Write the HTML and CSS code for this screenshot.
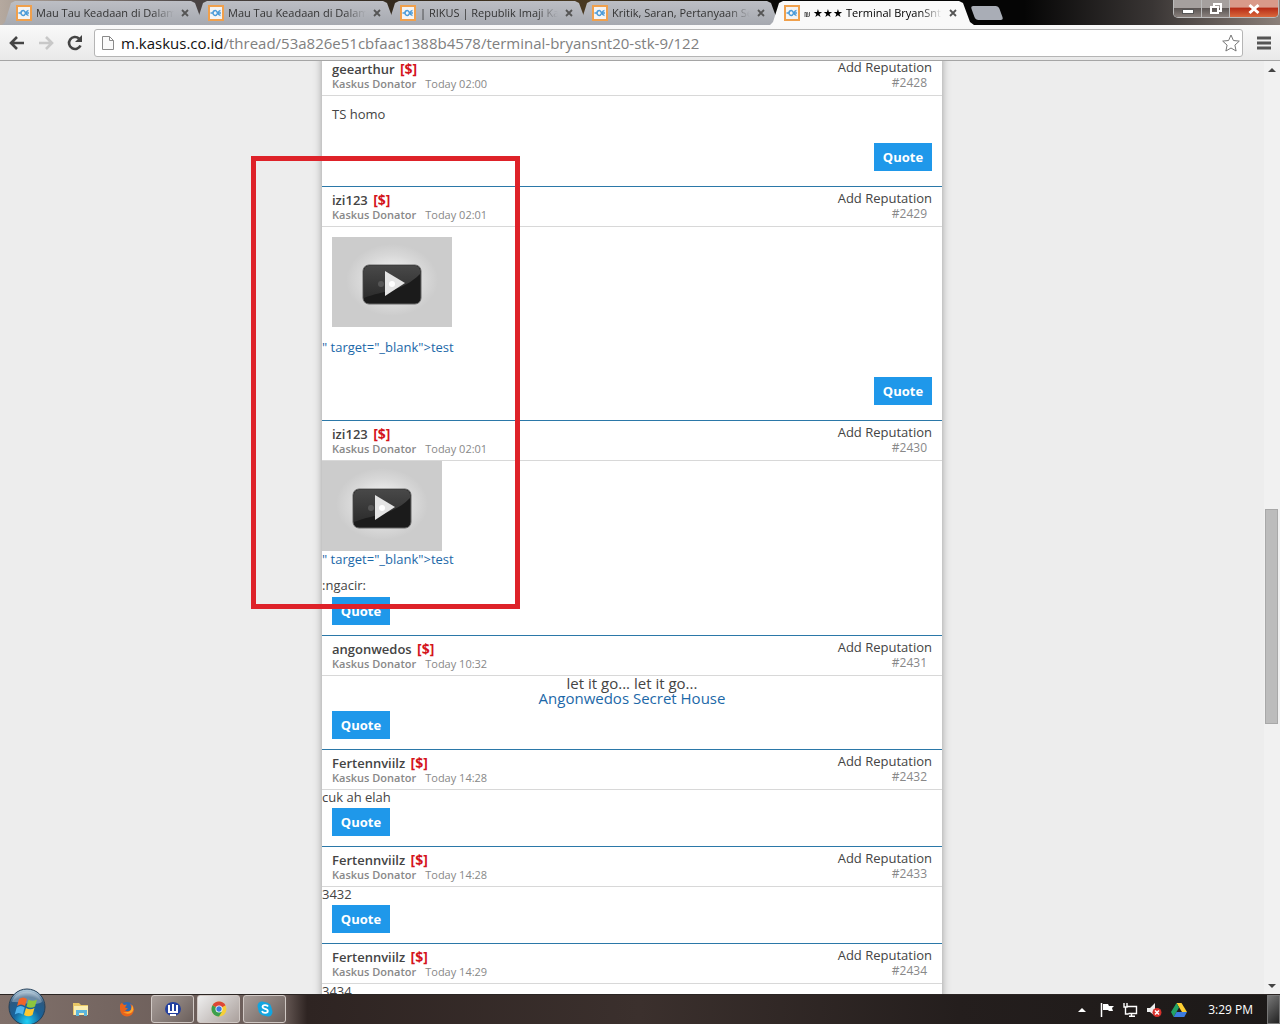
FILE: index.html
```html
<!DOCTYPE html>
<html lang="id">
<head>
<meta charset="utf-8">
<title>Terminal BryanSnt20</title>
<link rel="stylesheet" href="styles.css">
</head>
<body>
<svg class="defs" aria-hidden="true">
  <defs>
    <linearGradient id="gloss" x1="0" y1="0" x2="0" y2="1"><stop offset="0" stop-color="#484848"/><stop offset="1" stop-color="#2c2c2c"/></linearGradient>
    <radialGradient id="halo"><stop offset="0.4" stop-color="#e8e8e8"/><stop offset="0.7" stop-color="#d8d8d8"/><stop offset="1" stop-color="#ccc"/></radialGradient>
    <radialGradient id="orb" cx="50%" cy="90%" r="85%"><stop offset="0" stop-color="#1fd0f5"/><stop offset="0.45" stop-color="#16639c"/><stop offset="0.8" stop-color="#2d587e"/><stop offset="1" stop-color="#a9c3d6"/></radialGradient>
    <symbol id="fav" viewBox="0 0 16 16"><rect x="1" y="1" width="14" height="14" fill="#f4f4f4" stroke="#f0a04c" stroke-width="2"/><path d="M2.500 8h2M7.500 5.500a2.500 2.500 0 1 0 0 5c2 0 2.500-5 5-5M7.500 5.500c2 0 2 5 5 5M10 8h3" fill="none" stroke="#4b9bd8" stroke-width="1.500"/></symbol>
    <symbol id="close" viewBox="0 0 8 8"><path d="M1 1l6 6M7 1l-6 6" stroke="#555" stroke-width="1.800"/></symbol>
    <symbol id="video" viewBox="0 0 120 90"><rect width="120" height="90" fill="#ccc"/><ellipse cx="60" cy="43" rx="46" ry="36" fill="url(#halo)"/><rect x="31" y="28" width="58" height="39" rx="6" fill="#1b1b1b" stroke="#666"/><path d="M32 61V34q0-5 5-5h46q5 0 5 5v3C70 55 52 53 32 61z" fill="url(#gloss)"/><circle cx="49" cy="47" r="3" fill="#555"/><path d="M53 34l20 12-20 13z" fill="#e4e4e4"/><circle cx="60" cy="47" r="3" fill="#fff"/></symbol>
  </defs>
</svg>
<header class="titlebar">
  <nav class="tabs" aria-label="Tabs">
    <a class="tab" href="#t1"><svg class="fav"><use href="#fav"/></svg><span class="tab-title">Mau Tau Keadaan di Dalam</span><svg class="close"><use href="#close"/></svg></a>
    <a class="tab" href="#t2"><svg class="fav"><use href="#fav"/></svg><span class="tab-title">Mau Tau Keadaan di Dalam</span><svg class="close"><use href="#close"/></svg></a>
    <a class="tab" href="#t3"><svg class="fav"><use href="#fav"/></svg><span class="tab-title">| RIKUS | Republik Imaji Kask</span><svg class="close"><use href="#close"/></svg></a>
    <a class="tab" href="#t4"><svg class="fav"><use href="#fav"/></svg><span class="tab-title">Kritik, Saran, Pertanyaan Se</span><svg class="close"><use href="#close"/></svg></a>
    <a class="tab active" href="#t5"><svg class="fav"><use href="#fav"/></svg><span class="tab-title"><small>₪</small> ★★★ Terminal BryanSnt</span><svg class="close"><use href="#close"/></svg></a>
    <button class="newtab" aria-label="New tab"></button>
  </nav>
  <div class="winctl">
    <button aria-label="Minimize"><svg width="12" height="12"><rect x="0.500" y="6.500" width="11" height="4" fill="#fff" stroke="#555"/></svg></button>
    <button aria-label="Restore"><svg width="14" height="14"><path d="M5 4V2h7v7h-2M2 5h7v6H2z" fill="none" stroke="#fff" stroke-width="2"/><rect x="4.500" y="7.500" width="2" height="1" fill="#555"/></svg></button>
    <button class="exit" aria-label="Close"><svg width="12" height="12"><path d="M1.500 2l9 8M10.500 2l-9 8" stroke="#fff" stroke-width="3"/></svg></button>
  </div>
</header>
<div class="toolbar">
  <button aria-label="Back"><svg width="16" height="14"><path d="M15 7H2M8 1L2 7l6 6" fill="none" stroke="#444" stroke-width="2.600"/></svg></button>
  <button aria-label="Forward"><svg width="16" height="14"><path d="M1 7h13M8 1l6 6-6 6" fill="none" stroke="#c8c8c8" stroke-width="2.600"/></svg></button>
  <button aria-label="Reload"><svg width="16" height="16"><path d="M13.500 10.500A6 6 0 1 1 12 3.500" fill="none" stroke="#444" stroke-width="2.600"/><path d="M15 0v7H8z" fill="#444"/></svg></button>
  <div class="omnibox">
    <svg width="12" height="16"><path d="M.5 1.500h7l4 4v9H.5zM7.500 1.500v4h4" fill="#fafafa" stroke="#8a8a8a"/></svg>
    <a class="url" href="#url"><b>m.kaskus.co.id</b>/thread/53a826e51cbfaac1388b4578/terminal-bryansnt20-stk-9/122</a>
    <svg class="star" width="18" height="18"><path d="M9 1l2.400 5.500 5.900.6-4.400 4 1.200 5.900L9 14l-5.100 3 1.200-5.900-4.400-4 5.900-.6z" fill="#fff" stroke="#777"/></svg>
  </div>
  <button class="menu" aria-label="Menu"><svg width="14" height="14"><path d="M0 2h14M0 7h14M0 12h14" stroke="#555" stroke-width="3"/></svg></button>
</div>
<div class="viewport">
  <main class="page">
    <div class="thread">
      <article class="post">
        <header class="head"><div><h2>geearthur <em>[$]</em></h2><p><b>Kaskus Donator</b><time>Today 02:00</time></p></div><div class="meta"><a href="#rep">Add Reputation</a><span>#2428</span></div></header>
        <p class="text padded">TS homo</p>
        <button class="quote right">Quote</button>
      </article>
      <article class="post">
        <header class="head"><div><h2>izi123 <em>[$]</em></h2><p><b>Kaskus Donator</b><time>Today 02:01</time></p></div><div class="meta"><a href="#rep">Add Reputation</a><span>#2429</span></div></header>
        <svg class="video inset"><use href="#video"/></svg>
        <a class="text leak spaced" href="#test">" target="_blank"&gt;test</a>
        <button class="quote right">Quote</button>
      </article>
      <article class="post">
        <header class="head"><div><h2>izi123 <em>[$]</em></h2><p><b>Kaskus Donator</b><time>Today 02:01</time></p></div><div class="meta"><a href="#rep">Add Reputation</a><span>#2430</span></div></header>
        <svg class="video"><use href="#video"/></svg>
        <a class="text leak" href="#test">" target="_blank"&gt;test</a>
        <p class="text follow">:ngacir:</p>
        <button class="quote">Quote</button>
      </article>
      <article class="post">
        <header class="head"><div><h2>angonwedos <em>[$]</em></h2><p><b>Kaskus Donator</b><time>Today 10:32</time></p></div><div class="meta"><a href="#rep">Add Reputation</a><span>#2431</span></div></header>
        <p class="song">let it go... let it go...<br><a href="#house">Angonwedos Secret House</a></p>
        <button class="quote">Quote</button>
      </article>
      <article class="post">
        <header class="head"><div><h2>Fertennviilz <em>[$]</em></h2><p><b>Kaskus Donator</b><time>Today 14:28</time></p></div><div class="meta"><a href="#rep">Add Reputation</a><span>#2432</span></div></header>
        <p class="text">cuk ah elah</p>
        <button class="quote">Quote</button>
      </article>
      <article class="post">
        <header class="head"><div><h2>Fertennviilz <em>[$]</em></h2><p><b>Kaskus Donator</b><time>Today 14:28</time></p></div><div class="meta"><a href="#rep">Add Reputation</a><span>#2433</span></div></header>
        <p class="text">3432</p>
        <button class="quote">Quote</button>
      </article>
      <article class="post">
        <header class="head"><div><h2>Fertennviilz <em>[$]</em></h2><p><b>Kaskus Donator</b><time>Today 14:29</time></p></div><div class="meta"><a href="#rep">Add Reputation</a><span>#2434</span></div></header>
        <p class="text">3434</p>
        <button class="quote">Quote</button>
      </article>
      <div class="marker"></div>
    </div>
  </main>
  <div class="scrollbar">
    <svg width="8" height="4"><path d="M0 4l4-4 4 4z" fill="#444"/></svg>
    <div class="track"><div class="thumb"></div></div>
    <svg width="8" height="4"><path d="M0 0l4 4 4-4z" fill="#444"/></svg>
  </div>
</div>
<footer class="taskbar">
  <button class="start" aria-label="Start"><svg width="38" height="38"><circle cx="19" cy="19" r="18" fill="url(#orb)" stroke="#233f58"/><path d="M4 14C8 0 30 0 34 14 26 19 12 13 4 14z" fill="#fff" opacity=".3"/><path d="M11 11q4-3 8 0l-2 7q-4-3-8 0z" fill="#f0652a"/><path d="M20.500 11.500q4 2.500 8.500 0l-2 7q-4 2.500-8.500 0z" fill="#8dc63f"/><path d="M8.700 19.500q4-3 8 0l-2 7q-4-3-8 0z" fill="#4fb4ee"/><path d="M18 20q4 2.500 8.500 0l-2 7q-4 2.500-8.500 0z" fill="#fdc82f"/></svg></button>
  <div class="apps">
    <button aria-label="Explorer"><svg width="18" height="16"><path d="M1 2h6l2 2h7v10H1z" fill="#e9c765"/><path d="M2 5h14v9H2z" fill="#fbeeb1"/><path d="M4 15V9h11v6h-3v-3H7v3z" fill="#5db6dc"/></svg></button>
    <button aria-label="Firefox"><svg width="16" height="16"><circle cx="8" cy="8" r="7" fill="#2d68b0"/><path d="M1 4q1-2 2-2l2 2 3-.5-2 3 3 1-3 2q4 2 6-1 1-3-1-6 4 2 4 6a7 7 0 0 1-14 0z" fill="#e8641b"/><path d="M13 4q3 5-1 8-4 2-8-1 6 1 8-2z" fill="#fba92e"/></svg></button>
    <button class="open" aria-label="Word tool"><svg width="16" height="16"><ellipse cx="8" cy="8" rx="8" ry="7" fill="#2340a0"/><path d="M4 4v7h8V4M8 3v8M5 14h6" fill="none" stroke="#fff" stroke-width="2"/></svg></button>
    <button class="open lit" aria-label="Chrome"><svg width="16" height="16"><circle cx="8" cy="8" r="7.500" fill="#f6cf3a"/><path d="M8 8L1.500 4.300a7.500 7.500 0 0 1 13 0z" fill="#dd4637"/><path d="M8 8L1.500 4.300A7.500 7.500 0 0 0 8 15.500l3-5z" fill="#3b9f4e"/><circle cx="8" cy="8" r="3.500" fill="#fff"/><circle cx="8" cy="8" r="2.700" fill="#3c7be0"/></svg></button>
    <button class="open" aria-label="Skype"><svg width="16" height="16"><circle cx="5" cy="5" r="4.500" fill="#12a5e0"/><circle cx="11" cy="11" r="4.500" fill="#12a5e0"/><circle cx="8" cy="8" r="6.800" fill="#12a5e0"/><path d="M11 5.500C10 3.500 5.500 3.700 5.500 6c0 2.300 5.300 1.500 5.300 3.900 0 2.500-5 2.500-5.800 0" fill="none" stroke="#fff" stroke-width="1.800"/></svg></button>
  </div>
  <div class="tray">
    <svg class="more" width="8" height="4"><path d="M0 4l4-4 4 4z" fill="#fff"/></svg>
    <svg width="14" height="14"><path d="M1.500 0v14" stroke="#fff" stroke-width="1.500"/><path d="M3 1h5l1 2h5l-2 2 1 3H9L8 7H3z" fill="#fff"/></svg>
    <svg width="15" height="14"><path d="M4.500 3.500h9v7h-8M8.500 11v2M6 13.200h6M1 0v4h3V0M2.500 4v7h3" fill="none" stroke="#fff" stroke-width="1.400"/></svg>
    <svg width="15" height="14"><path d="M0 5h3l5-5v13L3 9H0z" fill="#eee"/><circle cx="10" cy="9.500" r="4.500" fill="#d8312c"/><path d="M8 7.500l4 4M12 7.500l-4 4" stroke="#fff" stroke-width="1.500"/></svg>
    <svg width="16" height="14"><path d="M5.500 0h5L16 9h-5z" fill="#fdcf33"/><path d="M5.500 0L8 4.500 2.700 14 0 9z" fill="#22a265"/><path d="M5.500 9H16l-2.700 5H2.700z" fill="#3c7be0"/></svg>
    <time class="clock">3:29 PM</time>
    <button class="desktop" aria-label="Show desktop"></button>
  </div>
</footer>
</body>
</html>
```
FILE: styles.css
```css
* { box-sizing: border-box; }
body { margin: 0; height: 100vh; display: flex; flex-direction: column; overflow: hidden; font: 13px/16px "Open Sans", sans-serif; color: #444; background: #ededed; }
button { border: 0; padding: 0; background: none; font: inherit; display: flex; align-items: center; justify-content: center; }
a { color: #1c68a8; text-decoration: none; }
h2, p { margin: 0; }
svg { display: block; flex: none; }
.defs { width: 0; height: 0; position: absolute; }

.titlebar { flex: none; height: 25px; display: flex; justify-content: space-between; align-items: flex-start; background: linear-gradient(90deg, #b5a99f 0, #4a4444 15%, #33291c 32%, #4a3a22 46%, #050505 62%, #050505 80%, #393534 90%, #8b807a 100%); }
.tabs { display: flex; padding: 1px 0 0 2px; }
.tab { width: 204px; height: 24px; margin-right: -12px; padding: 0 17px 0 14px; display: flex; align-items: center; background: linear-gradient(#bcbec4, #a6a9b0); clip-path: polygon(0 100%, 3px 88%, 9px 8%, 13px 0, 189px 0, 193px 8%, 200px 88%, 100% 100%); color: #333; font-size: 11px; }
.tab.active { background: #f9f9f9; color: #000; }
.fav { width: 16px; height: 16px; margin-right: 4px; }
.tab-title { flex: 1; margin-right: 7px; overflow: hidden; white-space: nowrap; mask-image: linear-gradient(90deg, #000 84%, transparent); }
.tab-title small { font-size: 8px; }
.close { width: 8px; height: 8px; }
.newtab { width: 28px; height: 14px; margin: 5px 0 0 11px; background: #a9adb6; border-radius: 3px; transform: skewX(20deg); }
.winctl { display: flex; height: 18px; margin-right: 1px; border: 1px solid #bbb; border-top: 0; border-radius: 0 0 5px 5px; overflow: hidden; }
.winctl button { width: 28px; background: linear-gradient(#a5a09e 45%, #5c5654 50%, #8a817d); border-right: 1px solid #bbb; }
.winctl .exit { width: 48px; border: 0; background: linear-gradient(#d99a8a 40%, #b82e18 50%, #d9683c); }

.toolbar { flex: none; height: 36px; display: flex; align-items: center; padding: 0 9px; background: linear-gradient(#f9f9f9, #e9e9e9); border-bottom: 1px solid #a5a5a5; }
.toolbar button { width: 16px; margin-right: 13px; }
.omnibox { flex: 1; height: 28px; margin-left: -2px; display: flex; align-items: center; gap: 7px; padding: 0 2px 0 7px; background: #fff; border: 1px solid #b5b5b5; border-radius: 3px; }
.url { flex: 1; font-size: 15px; line-height: 24px; color: #808080; white-space: nowrap; }
.url b { font-weight: 400; color: #111; }
.toolbar .menu { width: 14px; margin: 0 0 0 14px; }

.viewport { flex: 1; min-height: 0; display: flex; overflow: hidden; }
.page { flex: 1; display: flex; justify-content: center; align-items: flex-start; overflow: hidden; }
.thread { position: relative; flex: 0 1 620px; margin-top: -6px; background: #fff; box-shadow: 0 0 8px #999; }
.post { border-top: 1px solid #2b78a8; padding-bottom: 10px; display: flow-root; }
.head { height: 40px; display: flex; justify-content: space-between; padding: 5px 10px 0; border-bottom: 1px solid #d8d8d8; }
.head h2 { font-size: 13px; line-height: 16px; font-weight: 600; }
.head em { font-style: normal; font-size: 14px; font-weight: 700; color: #d4141c; margin-left: 2px; }
.head p { font-size: 11px; line-height: 14px; color: #888; }
.head p b { font-weight: 600; }
.head time { margin-left: 9px; }
.meta { display: flex; flex-direction: column; align-items: flex-end; margin-top: -2px; }
.meta a { color: #444; }
.meta span { margin-right: 5px; font-size: 12px; line-height: 16px; color: #888; }
.text { display: block; font-size: 13px; line-height: 14px; }
.padded { padding: 11px 10px 22px; }
.leak { line-height: 16px; }
.follow { padding: 11px 0 5px; }
.spaced { padding: 12px 0 22px; }
.song { font-size: 15px; line-height: 15px; text-align: center; padding-bottom: 5px; }
.video { width: 120px; height: 90px; }
.inset { margin: 10px 10px 0; }
.quote { width: 58px; height: 28px; margin: 0 10px; background: #1f98ea; color: #fff; font-weight: 700; }
.text + .quote { margin-top: 4px; }
.follow + .quote, .padded + .quote, .spaced + .quote { margin-top: 0; }
.right { margin: 0 10px 5px auto; }
.marker { position: absolute; left: -71px; top: 101px; width: 269px; height: 453px; border: 5px solid #de2229; pointer-events: none; }

.scrollbar { width: 16px; display: flex; flex-direction: column; align-items: center; padding: 7px 1px 6px 0; background: #f1f1f1; }
.track { flex: 1; width: 13px; display: flex; flex-direction: column; }
.track::before { content: ""; flex: 438; }
.track::after { content: ""; flex: 261; }
.thumb { flex: 213; background: #bcbcbc; border: 1px solid #a8a8a8; }

.taskbar { position: relative; flex: none; height: 30px; display: flex; justify-content: space-between; background: linear-gradient(90deg, #80706a 0, #6b5d59 16%, #6e605c 22%, #2e2422 24%, #3b302d 50%, #241e1d 75%, #1c1918 100%); border-top: 1px solid #2b2523; }
.start { position: absolute; left: 8px; top: -7px; }
.apps { display: flex; gap: 3px; padding-left: 59px; }
.apps button { width: 43px; height: 28px; }
.apps .open { border: 1px solid #d0c8c4; border-radius: 3px; background: linear-gradient(135deg, #a79d99, #6b5f5b); }
.apps .lit { background: linear-gradient(135deg, #eee, #aaa09c); }
.tray { display: flex; align-items: center; gap: 9px; }
.tray .more { margin-right: 5px; }
.clock { margin: 0 5px 0 12px; font-size: 12px; color: #fff; }
.desktop { width: 13px; height: 29px; border: 1px solid #777; background: linear-gradient(135deg, #777, #222); }
```
